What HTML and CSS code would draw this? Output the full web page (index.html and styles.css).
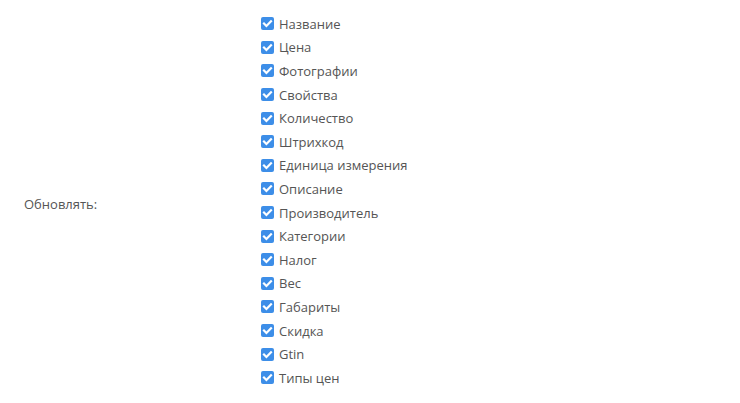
FILE: index.html
```html
<!DOCTYPE html>
<html lang="ru">
<head>
<meta charset="utf-8">
<link rel="stylesheet" href="styles.css">
</head>
<body>
<div class="form-row">
  <div class="label">Обновлять:</div>
  <ul class="checks">
    <li><span class="cb"><svg viewBox="0 0 13 13"><path d="M3 6.6 L5.4 9 L10 4.2"/></svg></span>Название</li>
    <li><span class="cb"><svg viewBox="0 0 13 13"><path d="M3 6.6 L5.4 9 L10 4.2"/></svg></span>Цена</li>
    <li><span class="cb"><svg viewBox="0 0 13 13"><path d="M3 6.6 L5.4 9 L10 4.2"/></svg></span>Фотографии</li>
    <li><span class="cb"><svg viewBox="0 0 13 13"><path d="M3 6.6 L5.4 9 L10 4.2"/></svg></span>Свойства</li>
    <li><span class="cb"><svg viewBox="0 0 13 13"><path d="M3 6.6 L5.4 9 L10 4.2"/></svg></span>Количество</li>
    <li><span class="cb"><svg viewBox="0 0 13 13"><path d="M3 6.6 L5.4 9 L10 4.2"/></svg></span>Штрихкод</li>
    <li><span class="cb"><svg viewBox="0 0 13 13"><path d="M3 6.6 L5.4 9 L10 4.2"/></svg></span>Единица измерения</li>
    <li><span class="cb"><svg viewBox="0 0 13 13"><path d="M3 6.6 L5.4 9 L10 4.2"/></svg></span>Описание</li>
    <li><span class="cb"><svg viewBox="0 0 13 13"><path d="M3 6.6 L5.4 9 L10 4.2"/></svg></span>Производитель</li>
    <li><span class="cb"><svg viewBox="0 0 13 13"><path d="M3 6.6 L5.4 9 L10 4.2"/></svg></span>Категории</li>
    <li><span class="cb"><svg viewBox="0 0 13 13"><path d="M3 6.6 L5.4 9 L10 4.2"/></svg></span>Налог</li>
    <li><span class="cb"><svg viewBox="0 0 13 13"><path d="M3 6.6 L5.4 9 L10 4.2"/></svg></span>Вес</li>
    <li><span class="cb"><svg viewBox="0 0 13 13"><path d="M3 6.6 L5.4 9 L10 4.2"/></svg></span>Габариты</li>
    <li><span class="cb"><svg viewBox="0 0 13 13"><path d="M3 6.6 L5.4 9 L10 4.2"/></svg></span>Скидка</li>
    <li><span class="cb"><svg viewBox="0 0 13 13"><path d="M3 6.6 L5.4 9 L10 4.2"/></svg></span>Gtin</li>
    <li><span class="cb"><svg viewBox="0 0 13 13"><path d="M3 6.6 L5.4 9 L10 4.2"/></svg></span>Типы цен</li>
  </ul>
</div>
</body>
</html>
```
FILE: styles.css
```css
html, body {
  margin: 0;
  padding: 0;
  background: #fff;
}
body {
  font-family: "Open Sans", "Noto Sans", sans-serif;
  font-size: 13px;
  color: #555;
}
.form-row {
  display: flex;
  align-items: center;
  padding-top: 12px;
}
.label {
  width: 261px;
  flex-shrink: 0;
  padding-left: 24px;
  box-sizing: border-box;
  padding-top: 6px;
}
.checks {
  list-style: none;
  margin: 0;
  padding: 0;
  display: flex;
  flex-direction: column;
}
.checks li {
  display: flex;
  align-items: center;
  height: 23.6px;
  line-height: 18px;
}
.cb {
  width: 13px;
  height: 13px;
  border-radius: 2px;
  background: #3d8ee8;
  margin-right: 5px;
  display: flex;
  flex-shrink: 0;
}
.cb svg {
  width: 13px;
  height: 13px;
}
.cb path {
  fill: none;
  stroke: #fff;
  stroke-width: 2.2;
  stroke-linecap: square;
}
```
